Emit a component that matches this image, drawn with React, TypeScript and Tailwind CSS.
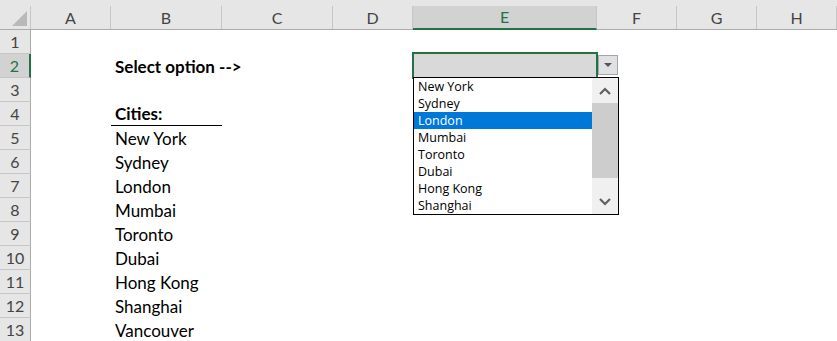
import React from 'react';

const columns = ['A', 'B', 'C', 'D', 'E', 'F', 'G', 'H'];
const cities = ['New York', 'Sydney', 'London', 'Mumbai', 'Toronto', 'Dubai', 'Hong Kong', 'Shanghai', 'Vancouver'];
const options = cities.slice(0, 8);

const gridCols = 'grid grid-cols-[31px_80px_111px_111px_80px_184px_80px_80px_80px]';

function cellB(row: number) {
  if (row === 2) return <span className="font-bold">Select option --&gt;</span>;
  if (row === 4) return <span className="font-bold">Cities:</span>;
  if (row >= 5) return <span>{cities[row - 5]}</span>;
  return null;
}

function Chevron({ up }: { up?: boolean }) {
  return (
    <svg width="12" height="8" viewBox="0 0 12 8">
      <polyline
        points={up ? '1,7 6,2 11,7' : '1,1 6,6 11,1'}
        fill="none"
        stroke="#606060"
        strokeWidth="2.2"
      />
    </svg>
  );
}

export default function App() {
  const rows = Array.from({ length: 13 }, (_, i) => i + 1);

  return (
    <div className="relative w-[837px] h-[341px] overflow-hidden bg-white font-['Lato',sans-serif] text-[17px] leading-none text-black">
      {/* column headers */}
      <div className="h-[6px] bg-[#e6e6e6]" />
      <div className={`${gridCols} h-[24px] bg-[#e6e6e6] border-b border-[#ababab] text-[16px] text-[#444]`}>
        <div className="relative border-r border-[#c6c6c6]">
          <div className="absolute right-[3px] bottom-[3px] w-0 h-0 border-l-[15px] border-l-transparent border-b-[15px] border-b-[#b9b9b9]" />
        </div>
        {columns.map((c) => (
          <div
            key={c}
            className={
              c === 'E'
                ? 'flex items-center justify-center bg-[#d2d2d2] border-r border-[#c6c6c6] border-b-2 border-b-[#217346] text-[#217346] -mb-px'
                : 'flex items-center justify-center border-r border-[#c6c6c6]'
            }
          >
            {c}
          </div>
        ))}
      </div>

      {/* rows */}
      {rows.map((r) => (
        <div key={r} className={`${gridCols} h-[24px]`}>
          <div
            className={
              r === 2
                ? 'flex items-center justify-center bg-[#d2d2d2] border-b border-[#c6c6c6] border-r-2 border-r-[#217346] text-[16px] text-[#217346]'
                : 'flex items-center justify-center bg-[#e6e6e6] border-b border-[#c6c6c6] border-r border-r-[#ababab] text-[16px] text-[#444]'
            }
          >
            {r}
          </div>
          <div />
          <div className={`flex items-center px-1 whitespace-nowrap ${r === 4 ? 'border-b border-black' : ''}`}>
            {cellB(r)}
          </div>
          <div />
          <div />
          <div className={r === 2 ? 'bg-[#d9d9d9]' : ''} />
          <div />
          <div />
          <div />
        </div>
      ))}

      {/* active cell border */}
      <div className="absolute left-[412px] top-[52px] w-[186px] h-[27px] border-2 border-[#217346]" />

      {/* dropdown button */}
      <div className="absolute left-[598px] top-[55px] w-[20px] h-[20px] border border-[#a6a6a6] bg-[#dfe1e5] flex items-center justify-center">
        <div className="w-0 h-0 border-l-[4px] border-l-transparent border-r-[4px] border-r-transparent border-t-[4px] border-t-[#555]" />
      </div>

      {/* dropdown list */}
      <div className="absolute left-[413px] top-[77px] w-[206px] h-[138px] border border-black bg-white flex font-['Open_Sans','Noto_Sans',sans-serif] text-[12.5px]">
        <div className="flex-1 flex flex-col">
          {options.map((o) => (
            <div
              key={o}
              className={`h-[17px] flex items-center pl-[4px] pt-[2px] leading-none ${o === 'London' ? 'bg-[#0078d7] text-white' : 'text-black'}`}
            >
              {o}
            </div>
          ))}
        </div>
        <div className="w-[26px] flex flex-col bg-[#f0f0f0]">
          <div className="h-[25px] flex items-center justify-center">
            <Chevron up />
          </div>
          <div className="h-[75px] bg-[#cdcdcd]" />
          <div className="flex-1" />
          <div className="h-[25px] flex items-center justify-center">
            <Chevron />
          </div>
        </div>
      </div>
    </div>
  );
}
